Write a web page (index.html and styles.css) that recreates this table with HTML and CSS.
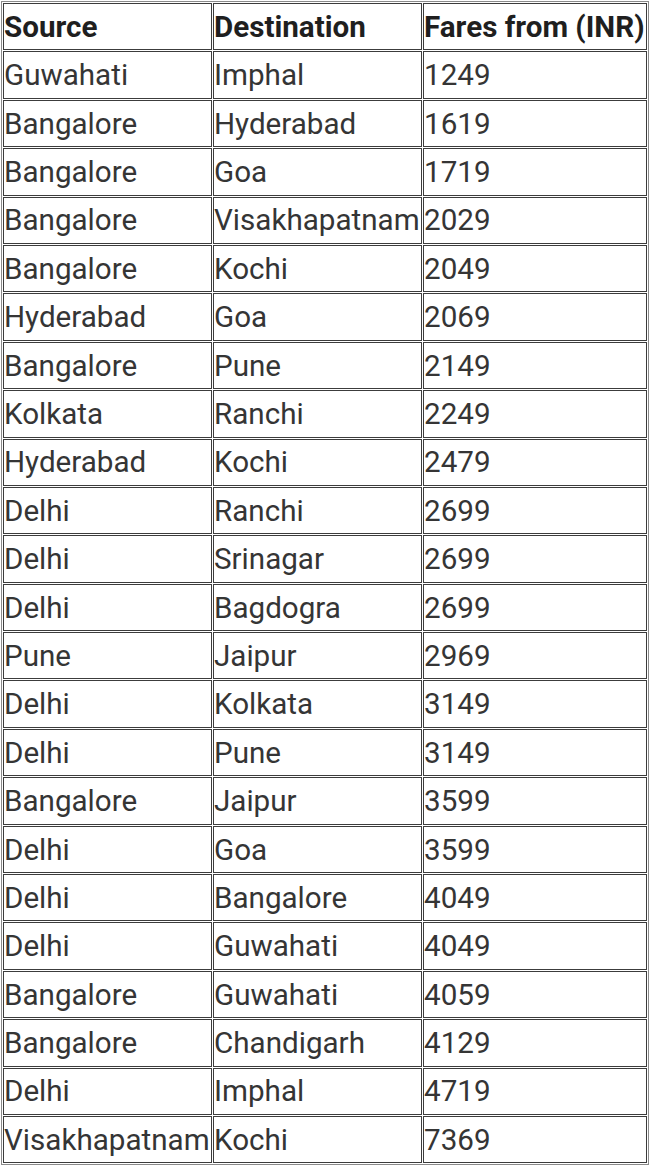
FILE: index.html
```html
<!DOCTYPE html>
<html>
<head>
<meta charset="utf-8">
<link rel="stylesheet" href="styles.css">
</head>
<body>
<table class="fares">
<thead>
<tr><th>Source</th><th>Destination</th><th>Fares from (INR)</th></tr>
</thead>
<tbody>
<tr><td>Guwahati</td><td>Imphal</td><td>1249</td></tr>
<tr><td>Bangalore</td><td>Hyderabad</td><td>1619</td></tr>
<tr><td>Bangalore</td><td>Goa</td><td>1719</td></tr>
<tr><td>Bangalore</td><td>Visakhapatnam</td><td>2029</td></tr>
<tr><td>Bangalore</td><td>Kochi</td><td>2049</td></tr>
<tr><td>Hyderabad</td><td>Goa</td><td>2069</td></tr>
<tr><td>Bangalore</td><td>Pune</td><td>2149</td></tr>
<tr><td>Kolkata</td><td>Ranchi</td><td>2249</td></tr>
<tr><td>Hyderabad</td><td>Kochi</td><td>2479</td></tr>
<tr><td>Delhi</td><td>Ranchi</td><td>2699</td></tr>
<tr><td>Delhi</td><td>Srinagar</td><td>2699</td></tr>
<tr><td>Delhi</td><td>Bagdogra</td><td>2699</td></tr>
<tr><td>Pune</td><td>Jaipur</td><td>2969</td></tr>
<tr><td>Delhi</td><td>Kolkata</td><td>3149</td></tr>
<tr><td>Delhi</td><td>Pune</td><td>3149</td></tr>
<tr><td>Bangalore</td><td>Jaipur</td><td>3599</td></tr>
<tr><td>Delhi</td><td>Goa</td><td>3599</td></tr>
<tr><td>Delhi</td><td>Bangalore</td><td>4049</td></tr>
<tr><td>Delhi</td><td>Guwahati</td><td>4049</td></tr>
<tr><td>Bangalore</td><td>Guwahati</td><td>4059</td></tr>
<tr><td>Bangalore</td><td>Chandigarh</td><td>4129</td></tr>
<tr><td>Delhi</td><td>Imphal</td><td>4719</td></tr>
<tr><td>Visakhapatnam</td><td>Kochi</td><td>7369</td></tr>
</tbody>
</table>
</body>
</html>
```
FILE: styles.css
```css
html, body {
  margin: 0;
  padding: 0;
  background: #ffffff;
}
body {
  font-family: Roboto, "Noto Sans", sans-serif;
  color: #353535;
}
.fares {
  margin: 1px 0 0 1px;
  border: 1px solid #8a8a8a;
  border-collapse: separate;
  border-spacing: 1px;
  table-layout: fixed;
  width: 648px;
  font-size: 29.6px;
}
.fares th, .fares td {
  border: 1px solid #3c3c3c;
  padding: 2px 0 0 0;
  height: 43.4px;
  text-align: left;
  vertical-align: middle;
  white-space: nowrap;
  line-height: 1;
}
.fares th {
  font-weight: 700;
  color: #1f1f1f;
}
.fares th:nth-child(1), .fares td:nth-child(1) { width: 207px; }
.fares th:nth-child(2), .fares td:nth-child(2) { width: 207px; }
```
